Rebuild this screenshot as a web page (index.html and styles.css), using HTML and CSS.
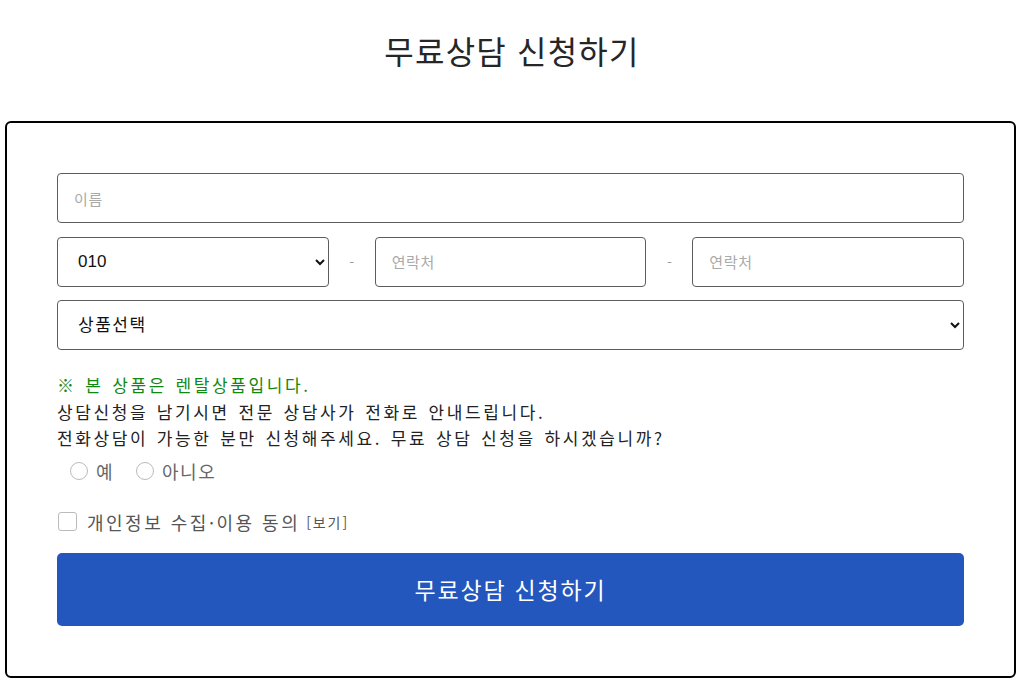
FILE: index.html
```html
<!DOCTYPE html>
<html lang="ko">
<head>
    <meta charset="UTF-8">
    <meta name="viewport" content="width=device-width, initial-scale=1.0">
    <title>무료상담 신청하기</title>
    <link rel="stylesheet" href="styles.css">
</head>
<body>

<h2 class="title">무료상담 신청하기</h2>

<form class="consult-box" onsubmit="return false;">
    <div class="fields">
        <input type="text" class="field" placeholder="이름">

        <div class="phone-row">
            <select class="field">
                <option>010</option>
                <option>011</option>
                <option>016</option>
                <option>017</option>
            </select>
            <span class="dash">-</span>
            <input type="text" class="field" placeholder="연락처">
            <span class="dash">-</span>
            <input type="text" class="field" placeholder="연락처">
        </div>

        <select class="field product">
            <option>상품선택</option>
        </select>
    </div>

    <div class="notice">
        <p class="green">※ 본 상품은 렌탈상품입니다.</p>
        <p>상담신청을 남기시면 전문 상담사가 전화로 안내드립니다.</p>
        <p>전화상담이 가능한 분만 신청해주세요. 무료 상담 신청을 하시겠습니까?</p>
    </div>

    <div class="radios">
        <label><input type="radio" name="agree_call"> 예</label>
        <label><input type="radio" name="agree_call"> 아니오</label>
    </div>

    <div class="agree">
        <label><input type="checkbox"> 개인정보 수집·이용 동의</label>
        <a href="#" class="view">[보기]</a>
    </div>

    <button type="submit" class="submit-btn">무료상담 신청하기</button>
</form>

</body>
</html>
```

FILE: styles.css
```css
body {
    margin: 0;
    background-color: #fff;
    font-family: "Noto Sans CJK KR", "Noto Sans", sans-serif;
    color: #333;
}
.title {
    margin: 0;
    padding: 29px 0 50px;
    font-size: 32px;
    line-height: 42px;
    font-weight: 400;
    text-align: center;
    color: #262626;
    letter-spacing: 1.2px;
}
.consult-box {
    margin: 0 8px 0 5px;
    padding: 50px;
    border: 2px solid #000;
    border-radius: 6px;
}
.fields {
    display: flex;
    flex-direction: column;
    gap: 13.5px;
}
.field {
    box-sizing: border-box;
    width: 100%;
    height: 50px;
    border: 1px solid #5c5c5c;
    border-radius: 4px;
    background-color: #fff;
    padding: 0 16px;
    font-size: 15px;
    letter-spacing: 0.6px;
    font-family: "Noto Sans CJK KR", "Noto Sans", sans-serif;
    color: #222;
    outline: none;
}
.field::placeholder {
    color: #aaa;
}
select.field {
    padding-left: 16px;
    font-family: "Liberation Sans", "Noto Sans CJK KR", sans-serif;
    font-size: 17px;
    letter-spacing: 0;
    color: #111;
}
select.product {
    letter-spacing: 1.5px;
}
.phone-row {
    display: grid;
    grid-template-columns: 1fr 46px 1fr 46px 1fr;
    align-items: center;
}
.dash {
    text-align: center;
    color: #999;
    font-size: 14px;
}
.notice {
    margin-top: 22px;
    font-size: 17px;
    line-height: 26.5px;
    letter-spacing: 2.6px;
    word-spacing: 1.3px;
    color: #222;
}
.notice p {
    margin: 0;
}
.notice .green {
    color: #118811;
}
.radios {
    margin-top: 6px;
    padding-left: 13px;
    display: flex;
    gap: 22px;
    line-height: 26px;
    font-size: 18px;
    color: #666;
}
.radios label,
.agree label {
    display: flex;
    align-items: center;
    gap: 8px;
    letter-spacing: 1.5px;
}
.radios input {
    appearance: none;
    width: 18px;
    height: 18px;
    margin: 0;
    border: 1px solid #bbb;
    border-radius: 50%;
    background-color: #fff;
}
.agree {
    margin-top: 25px;
    display: flex;
    align-items: center;
    gap: 6px;
    line-height: 26px;
    font-size: 18px;
    color: #555;
}
.agree label {
    letter-spacing: 2.5px;
}
.agree input {
    appearance: none;
    width: 19px;
    height: 19px;
    margin: 0 2px 0 1px;
    border: 1px solid #bbb;
    border-radius: 3px;
    background-color: #fff;
}
.view {
    font-size: 14px;
    color: #555;
    text-decoration: none;
    letter-spacing: 1.9px;
}
.submit-btn {
    display: block;
    width: 100%;
    height: 73px;
    margin-top: 18px;
    border: none;
    border-radius: 5px;
    background-color: #2357bd;
    color: #fff;
    font-size: 23px;
    font-family: "Noto Sans CJK KR", "Noto Sans", sans-serif;
    letter-spacing: 1.8px;
    cursor: pointer;
}
```
